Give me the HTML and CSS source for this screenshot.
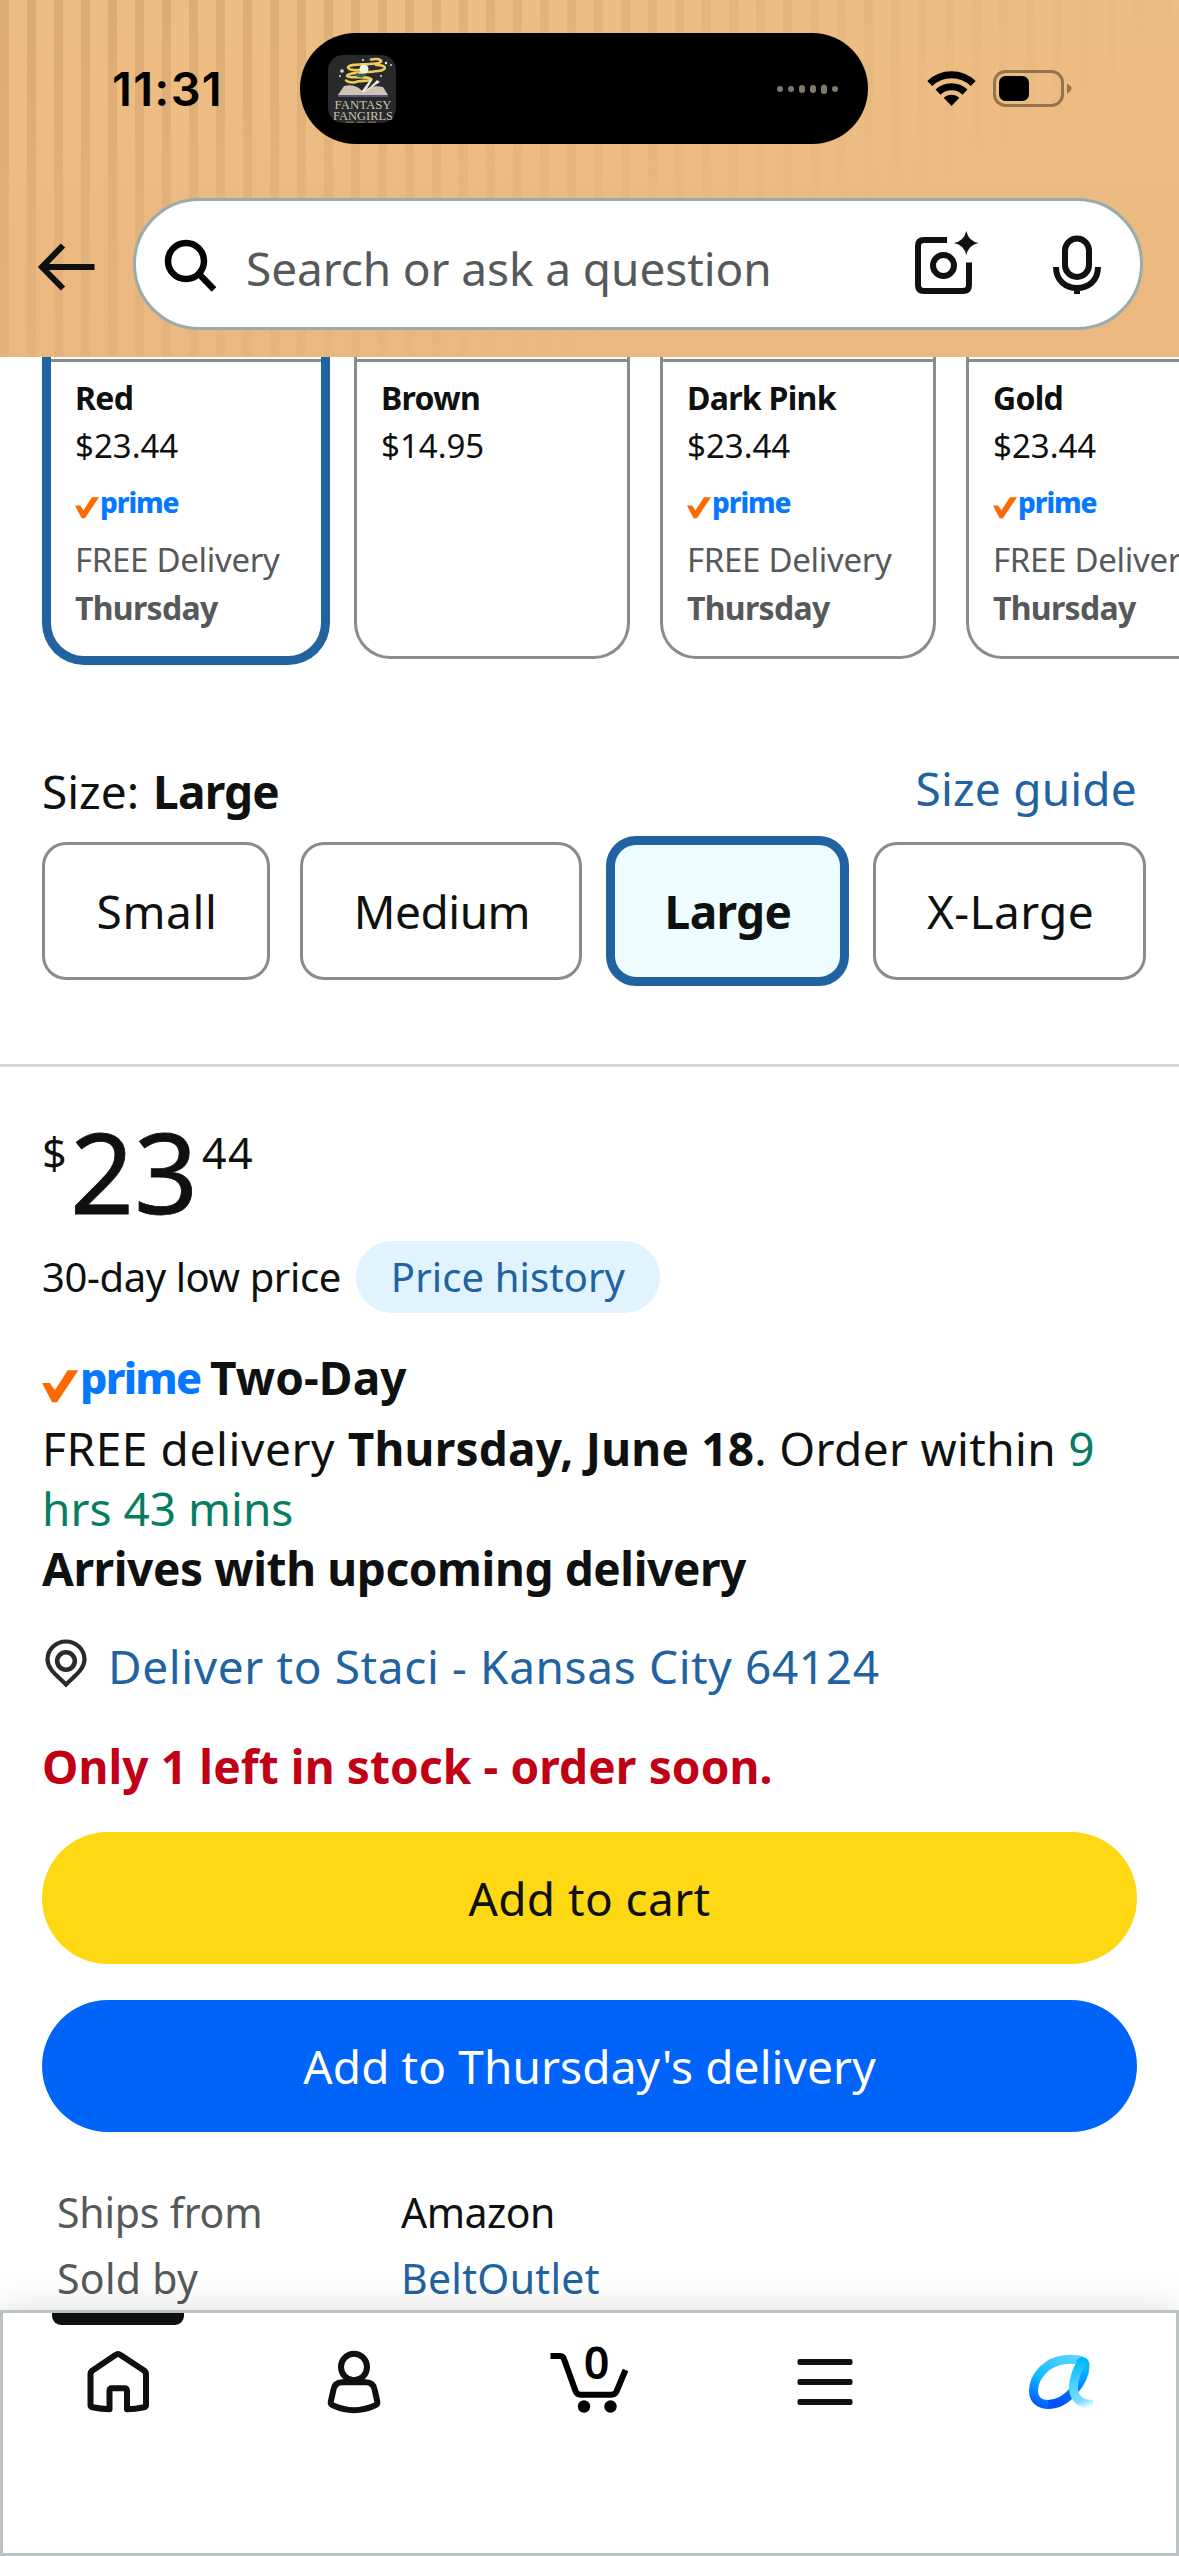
FILE: index.html
```html
<!DOCTYPE html>
<html lang="en">
<head>
<meta charset="utf-8">
<title>Product page</title>
<link rel="stylesheet" href="styles.css">
</head>
<body>
<header class="top">
  <div class="status">
    <div class="time">11:31</div>
    <div class="island">
      <svg class="art" viewBox="328 55 68 68">
        <rect x="328" y="55" width="68" height="68" rx="15" fill="#27292b"/>
        <g fill="none" stroke="#f0c95c" stroke-width="2.600" stroke-linecap="round">
          <path d="M371 59.500C380 58 384 61 379 63C366 65.500 349 63 348 67.500C349 71 360 70 366 70"/>
          <path d="M376 65C388 65 387 70 378 71C366 73 347 72 347 76C349 79 366 75 371 79C371 82 360 80 356 82C352 83 348 82 346 80.500"/>
        </g>
        <path d="M356 74q6 5 10-2" stroke="#2d6b55" stroke-width="3" fill="none"/>
        <circle cx="364" cy="69" r="4.500" fill="#f5efe0"/>
        <g fill="#ddd"><circle cx="342" cy="71" r="1.800"/><circle cx="386" cy="63" r="1.300"/><circle cx="391" cy="65" r="1"/><circle cx="363" cy="60" r="1.100"/><circle cx="340" cy="76" r="1"/><circle cx="381" cy="76" r="1"/></g>
        <path d="M338 95L344 86Q356 83 363 92Q370 84 383 87L388 95Z" fill="#cfc3b6"/>
        <path d="M361 92L370 80L373 79L365 92ZM365 92L377 80L380 82Z" fill="#eee6da"/>
        <path d="M338 96H388" stroke="#6b6295" stroke-width="1.600"/>
        <text class="art-word" x="334.500" y="108.500" textLength="57" lengthAdjust="spacingAndGlyphs">FANTASY</text>
        <text class="art-word" x="333" y="119.500" textLength="60" lengthAdjust="spacingAndGlyphs">FANGIRLS</text>
        <path d="M346 122.200H378" stroke="#7d7a4a" stroke-width="1.200" stroke-dasharray="8 3"/>
      </svg>
      <svg class="wave" viewBox="776 79 64 20" fill="#807a6a">
        <ellipse cx="780" cy="89" rx="3" ry="3"/><ellipse cx="791" cy="89" rx="3" ry="3"/>
        <rect x="799" y="85" width="6" height="8" rx="3"/><rect x="810" y="85" width="6" height="8" rx="3"/>
        <rect x="821" y="84.500" width="6" height="9.500" rx="3"/><ellipse cx="835" cy="89" rx="3" ry="3"/>
      </svg>
    </div>
    <div class="signals">
      <svg class="wifi" viewBox="926 66 52 44">
        <g fill="none" stroke="#000" stroke-width="7.200">
          <path d="M929.800 82.500A31.300 31.300 0 0 1 973.200 82.500"/>
          <path d="M938 91.200A19.500 19.500 0 0 1 965 91.200"/>
        </g>
        <path d="M951.500 105L943.700 96.800A11.300 11.300 0 0 1 959.300 96.800Z"/>
      </svg>
      <svg class="battery" viewBox="992 66 80 44">
        <rect x="994.500" y="70.500" width="68" height="34" rx="11" fill="none" stroke="#91744e" stroke-width="3"/>
        <rect x="999" y="75" width="30" height="25" rx="6.500"/>
        <path d="M1067 82.500Q1071.500 85 1071.500 87.500T1067 92.500Z" fill="#91744e"/>
      </svg>
    </div>
  </div>
  <div class="search-row">
    <svg class="back" viewBox="38 198 58 132" fill="none" stroke="#0f1111" stroke-width="6">
      <path d="M94.500 267H42M63 245.500L42 267L63 288.500"/>
    </svg>
    <div class="search">
      <svg class="glass" viewBox="160 201 60 126" fill="none" stroke="#000" stroke-width="6.500">
        <circle cx="186" cy="261" r="18"/><path d="M199 274L214 289.500"/>
      </svg>
      <span class="placeholder">Search or ask a question</span>
      <svg class="camera" viewBox="905 201 80 126" fill="none" stroke="#0f1111" stroke-width="6">
        <path d="M947 240H924Q918 240 918 246V285Q918 291 924 291H963Q969 291 969 285V262.500"/>
        <circle cx="943.500" cy="265.500" r="10.500"/>
        <path d="M966.300 231Q968.500 241 978.500 243Q968.500 245 966.300 255Q964 245 954 243Q964 241 966.300 231Z" fill="#0f1111" stroke="none"/>
      </svg>
      <svg class="mic" viewBox="1045 201 64 126" fill="none" stroke="#0f1111" stroke-width="6">
        <rect x="1065" y="238.500" width="24" height="38.500" rx="12"/>
        <path d="M1056 267C1056 281 1066 288 1077 288S1098 281 1098 267M1077 288V294"/>
      </svg>
    </div>
  </div>
</header>

<main class="content">
  <section class="variants">
    <article class="card selected">
      <div class="card-body">
        <b>Red</b><span class="amount">$23.44</span>
        <div class="prime"><svg class="check" viewBox="0 0 26 32"><path d="M0 16.600H5.400L8.800 21.600L17.600 8H24.900L10.300 29.800H6.900L3.600 23.500Z"/></svg>prime</div>
        <span class="ship">FREE Delivery</span><b class="ship">Thursday</b>
      </div>
    </article>
    <article class="card">
      <div class="card-body"><b>Brown</b><span class="amount">$14.95</span></div>
    </article>
    <article class="card">
      <div class="card-body">
        <b>Dark Pink</b><span class="amount">$23.44</span>
        <div class="prime"><svg class="check" viewBox="0 0 26 32"><path d="M0 16.600H5.400L8.800 21.600L17.600 8H24.900L10.300 29.800H6.900L3.600 23.500Z"/></svg>prime</div>
        <span class="ship">FREE Delivery</span><b class="ship">Thursday</b>
      </div>
    </article>
    <article class="card">
      <div class="card-body">
        <b>Gold</b><span class="amount">$23.44</span>
        <div class="prime"><svg class="check" viewBox="0 0 26 32"><path d="M0 16.600H5.400L8.800 21.600L17.600 8H24.900L10.300 29.800H6.900L3.600 23.500Z"/></svg>prime</div>
        <span class="ship">FREE Delivery</span><b class="ship">Thursday</b>
      </div>
    </article>
  </section>

  <section class="sizes">
    <div class="size-head">
      <div>Size: <b>Large</b></div>
      <a class="guide">Size guide</a>
    </div>
    <div class="size-list">
      <button class="size small">Small</button>
      <button class="size medium">Medium</button>
      <button class="size large">Large</button>
      <button class="size xlarge">X-Large</button>
    </div>
  </section>

  <section class="offer">
    <div class="price"><span class="sym">$</span><span class="whole">23</span><span class="cents">44</span></div>
    <div class="low"><span class="low-text">30-day low price</span><a class="pill">Price history</a></div>
    <div class="two-day">
      <div class="prime big"><svg class="check" viewBox="0 0 26 32"><path d="M0 16.600H5.400L8.800 21.600L17.600 8H24.900L10.300 29.800H6.900L3.600 23.500Z"/></svg>prime</div>
      <b>Two-Day</b>
    </div>
    <div class="delivery">
      <div><span class="free">FREE delivery </span><b class="date">Thursday, June 18</b><span class="within">. Order within <span class="green">9 hrs 43 mins</span></span></div>
      <b class="arrives">Arrives with upcoming delivery</b>
    </div>
    <div class="deliver-to">
      <svg class="pin" viewBox="42 1636 50 60" fill="none" stroke="#2a2a2a">
        <path d="M66 1684.500C59 1677 47.500 1670 47.500 1659.500A18.500 18 0 0 1 84.500 1659.500C84.500 1670 73 1677 66 1684.500Z" stroke-width="4.200"/>
        <circle cx="66" cy="1661" r="8.800" stroke-width="4.600"/>
      </svg>
      <a class="place">Deliver to Staci - Kansas City 64124</a>
    </div>
    <b class="stock">Only 1 left in stock - order soon.</b>
    <div class="actions">
      <button class="cta cart">Add to cart</button>
      <button class="cta thursday">Add to Thursday's delivery</button>
    </div>
    <dl class="seller">
      <dt>Ships from</dt><dd class="amazon">Amazon</dd>
      <dt class="sold">Sold by</dt><dd class="outlet">BeltOutlet</dd>
    </dl>
  </section>
</main>

<nav class="tabs">
  <a class="tab active"><svg viewBox="68 2333 100 90" fill="none" stroke="#0f1111" stroke-width="6" stroke-linejoin="round">
    <path d="M90.500 2374.500Q90.500 2372 92.500 2370.500L115.500 2355Q118 2353 120.500 2355L144 2370.500Q146 2372 146 2374.500V2405Q146 2406.800 144 2407.300Q135 2409.200 127 2409.200V2391Q127 2388.300 124.500 2388.300H112Q109.500 2388.300 109.500 2391V2409.200Q101 2409.200 92.500 2407.300Q90.500 2406.800 90.500 2405Z"/>
  </svg></a>
  <a class="tab"><svg viewBox="303.700 2333 100 90" fill="none" stroke="#0f1111" stroke-width="6">
    <ellipse cx="353.700" cy="2367" rx="13" ry="13.300"/>
    <path d="M342 2382.300H365.500Q373.500 2382.300 374.500 2390.500L377 2401.500Q377.500 2404.500 374 2405.800Q364 2410.200 353.700 2410.200T333.500 2405.800Q330 2404.500 330.500 2401.500L333 2390.500Q334 2382.300 342 2382.300Z"/>
  </svg></a>
  <a class="tab"><svg viewBox="539.500 2333 100 90" fill="none" stroke="#000" stroke-width="6">
    <path d="M551 2356H560Q563.500 2356 564.500 2359L576 2391Q577.300 2394.700 581 2394.700H612Q615.500 2394.700 617 2391.500L626 2370"/>
    <circle cx="584.500" cy="2406.500" r="6.200" fill="#000" stroke="none"/><circle cx="611" cy="2406.500" r="6.200" fill="#000" stroke="none"/>
    <text class="count" x="597.200" y="2379" text-anchor="middle">0</text>
  </svg></a>
  <a class="tab"><svg viewBox="775.500 2333 100 90" fill="#0f1111">
    <rect x="798" y="2359" width="55" height="6" rx="2"/><rect x="798" y="2379" width="55" height="6" rx="2"/><rect x="798" y="2399" width="55" height="6" rx="2"/>
  </svg></a>
  <a class="tab"><svg viewBox="1011 2333 100 90" fill="none" stroke-width="9">
    <defs>
      <linearGradient id="loop" gradientUnits="userSpaceOnUse" x1="1072" y1="2356" x2="1042" y2="2409"><stop offset="0" stop-color="#5ad4ff"/><stop offset=".55" stop-color="#12beff"/><stop offset="1" stop-color="#0058ff"/></linearGradient>
      <linearGradient id="rise" gradientUnits="userSpaceOnUse" x1="1060" y1="2405" x2="1085" y2="2362"><stop offset="0" stop-color="#0050ff"/><stop offset=".4" stop-color="#0072ff"/><stop offset=".85" stop-color="#00b8ff"/></linearGradient>
      <linearGradient id="tail" gradientUnits="userSpaceOnUse" x1="1078" y1="2362" x2="1095" y2="2406"><stop offset="0" stop-color="#00bcff"/><stop offset=".5" stop-color="#5ad4ff"/><stop offset=".8" stop-color="#7fdfff"/><stop offset="1" stop-color="#fff"/></linearGradient>
    </defs>
    <path d="M1082 2361C1077 2359 1070 2359 1066 2359.500C1046 2361 1033.500 2377 1033.500 2391C1033.500 2400 1040 2404.500 1048.500 2404.500" stroke="url(#loop)"/>
    <path d="M1048 2404.500C1068 2404.500 1085 2380 1085 2366C1085 2361 1082 2360 1080 2364" stroke="url(#rise)"/>
    <path d="M1083 2361.500C1077 2368 1073.500 2380 1073.500 2388C1073.500 2399 1082 2404.500 1093 2404.500" stroke="url(#tail)"/>
  </svg></a>
</nav>
</body>
</html>
```
FILE: styles.css
```css
* { box-sizing: border-box; }

body {
  margin: 0;
  width: 1179px;
  height: 2556px;
  overflow: hidden;
  display: flex;
  flex-direction: column;
  background: #fff;
  color: #0f1111;
  font: 46px/60px "Noto Sans", sans-serif;
}

svg { display: block; flex: none; }
b { font-weight: 700; }
a { color: #2162a1; }
button { font: inherit; color: inherit; padding: 0; }

/* Header with status bar and search */
.top {
  position: relative;
  z-index: 2;
  flex: none;
  height: 357px;
  padding-top: 33px;
  background: linear-gradient(#edbe84, #ebb87f);
}
.top::before {
  content: "";
  position: absolute;
  inset: 0;
  background: repeating-linear-gradient(90deg, #dcab75 0 9px, transparent 9px 27px);
  -webkit-mask-image: linear-gradient(155deg, #000 5%, transparent 68%);
  mask-image: linear-gradient(155deg, #000 5%, transparent 68%);
}
.status {
  position: relative;
  display: grid;
  grid-template-columns: 300px 568px 311px;
  height: 111px;
}
.time {
  align-self: center;
  padding-left: 112px;
  font: 600 47px/60px Inter, sans-serif;
  letter-spacing: 1.300px;
  color: #000;
}
.island {
  display: flex;
  align-items: center;
  justify-content: space-between;
  padding: 0 28px;
  border-radius: 56px;
  background: #000;
}
.art { width: 68px; height: 68px; }
.art-word { font: 13.500px "Liberation Serif", serif; fill: #c9c2b6; }
.wave { width: 64px; height: 20px; }
.signals {
  display: flex;
  align-items: center;
  padding-left: 58px;
  gap: 14px;
}
.wifi { width: 52px; height: 44px; }
.battery { width: 80px; height: 44px; }

.search-row {
  position: relative;
  display: flex;
  margin: 54px 36px 0 38px;
  gap: 37px;
}
.back { width: 58px; height: 132px; }
.search {
  flex: 1;
  display: flex;
  height: 132px;
  border: 3px solid #98abad;
  border-radius: 66px;
  background: #fff;
}
.glass { width: 60px; height: 126px; margin-left: 24px; }
.placeholder {
  flex: 1;
  padding: 37px 0 0 26px;
  color: #565959;
  letter-spacing: -0.100px;
}
.camera { width: 80px; height: 126px; }
.mic { width: 64px; height: 126px; margin: 0 31px 0 60px; }

/* Colour variants */
.content {
  flex: none;
  height: 1953px;
  overflow: hidden;
}
.variants {
  display: flex;
  gap: 30px;
  height: 302px;
  padding-left: 48px;
}
.card {
  flex: none;
  width: 276px;
  height: 302px;
  padding-top: 2px;
  border: 3px solid #888c8c;
  border-top: 0;
  border-radius: 0 0 36px 36px;
  font-size: 33px;
  line-height: 48px;
}
.card.selected {
  width: 288px;
  height: 308px;
  margin: 0 -6px;
  border: 9px solid #2162a1;
  border-top: 0;
  border-radius: 0 0 42px 42px;
}
.card-body {
  display: flex;
  flex-direction: column;
  padding: 12px 0 0 24px;
  border-top: 3px solid #888c8c;
}
.card b { font-size: 32px; letter-spacing: -0.700px; }
.ship { color: #565959; letter-spacing: -0.300px; }
.prime {
  display: flex;
  margin: 19px 0 15px;
  height: 32px;
  color: #0578ff;
  font-size: 28px;
  font-weight: 800;
  line-height: 27px;
  letter-spacing: -1.100px;
}
.check { width: 25px; height: 32px; fill: #ff6a00; }

/* Size picker */
.sizes {
  margin-top: 102px;
  padding: 0 42px 84px;
  border-bottom: 3px solid #d5d9d9;
}
.size-head {
  display: flex;
  justify-content: space-between;
  height: 60px;
}
.size-head b { letter-spacing: -0.800px; margin-left: 2px; }
.guide { margin-top: -3px; letter-spacing: 0.200px; }
.size-list {
  display: flex;
  gap: 30px;
  height: 138px;
  margin: 21px -20px 0 0;
}
.size {
  flex: none;
  height: 138px;
  border: 3px solid #888c8c;
  border-radius: 24px;
  background: #fff;
}
.small { width: 228px; padding-left: 2px; letter-spacing: 0.600px; }
.medium { width: 282px; padding-left: 2px; letter-spacing: -0.500px; }
.large {
  width: 243px;
  height: 150px;
  margin: -6px;
  padding-left: 1px;
  border: 9px solid #2162a1;
  border-radius: 30px;
  background: #edfdff;
  font-weight: 700;
  letter-spacing: -0.600px;
}
.xlarge { width: 273px; padding-left: 2px; letter-spacing: 0.400px; }

/* Offer */
.offer { padding: 53px 42px 0; }
.price { display: flex; height: 100px; }
.sym, .cents { padding-top: 8px; font-size: 43px; line-height: 50px; }
.sym { width: 28px; }
.whole { width: 132px; font-size: 112px; font-weight: 400; line-height: 102px; -webkit-text-stroke: 0.800px #0f1111; }
.cents { letter-spacing: 1.500px; }
.low {
  display: flex;
  align-items: center;
  gap: 14px;
  margin-top: 21px;
  font-size: 40px;
}
.low-text { width: 300px; letter-spacing: -0.400px; white-space: nowrap; }
.pill {
  width: 304px;
  height: 72px;
  border-radius: 36px;
  background: #e0f3ff;
  line-height: 72px;
  text-align: center;
  letter-spacing: 0.100px;
}
.two-day { display: flex; gap: 8px; margin-top: 34px; }
.two-day > b { letter-spacing: 0.100px; }
.prime.big {
  width: 160px;
  height: 49px;
  margin: 11px 0 0;
  font-size: 43px;
  line-height: 40px;
  letter-spacing: -1.700px;
}
.big .check { width: 38px; height: 48px; }
.delivery { margin-top: 11px; }
.free { letter-spacing: 0.600px; }
.date { letter-spacing: 0.200px; }
.within { letter-spacing: 0.350px; }
.green { color: #067d62; letter-spacing: 0; }
.arrives { letter-spacing: -0.400px; }
.deliver-to { display: flex; margin-top: 38px; }
.pin { width: 50px; height: 60px; }
.place { margin-left: 16px; letter-spacing: 0.620px; }
.stock { display: block; margin-top: 40px; color: #c10015; letter-spacing: 0.120px; }
.actions {
  display: flex;
  flex-direction: column;
  gap: 36px;
  margin-top: 36px;
}
.cta { height: 132px; border: 0; border-radius: 66px; }
.cart { background: #ffd814; letter-spacing: 0.400px; }
.thursday { background: #0064fb; color: #fff; letter-spacing: 0.100px; }
.seller {
  display: grid;
  grid-template-columns: 345px 1fr;
  margin: 47px 0 0 15px;
  font-size: 41px;
  line-height: 66px;
}
.seller dt { color: #565959; letter-spacing: -0.200px; }
.seller dd { margin: 0 0 0 -1px; }
.seller .sold { letter-spacing: 0.300px; }
.amazon { letter-spacing: -0.500px; }
.outlet { color: #2162a1; letter-spacing: 0.300px; }

/* Bottom tabs */
.tabs {
  position: relative;
  z-index: 1;
  display: grid;
  grid-template-columns: repeat(5, 235.800px);
  height: 246px;
  border: 3px solid #bbc2c4;
  background: #fff;
  box-shadow: 0 0 36px rgba(15, 17, 17, 0.14);
}
.tab {
  display: flex;
  flex-direction: column;
  align-items: center;
  margin-left: -6px;
}
.tab svg { width: 100px; height: 90px; margin-top: 20px; }
.tab.active::before {
  content: "";
  width: 132px;
  height: 12px;
  border-radius: 0 0 9px 9px;
  background: #0f1111;
}
.tab.active svg { margin-top: 8px; }
.count { font: 600 45px "Noto Sans", sans-serif; fill: #000; stroke: none; }
```
